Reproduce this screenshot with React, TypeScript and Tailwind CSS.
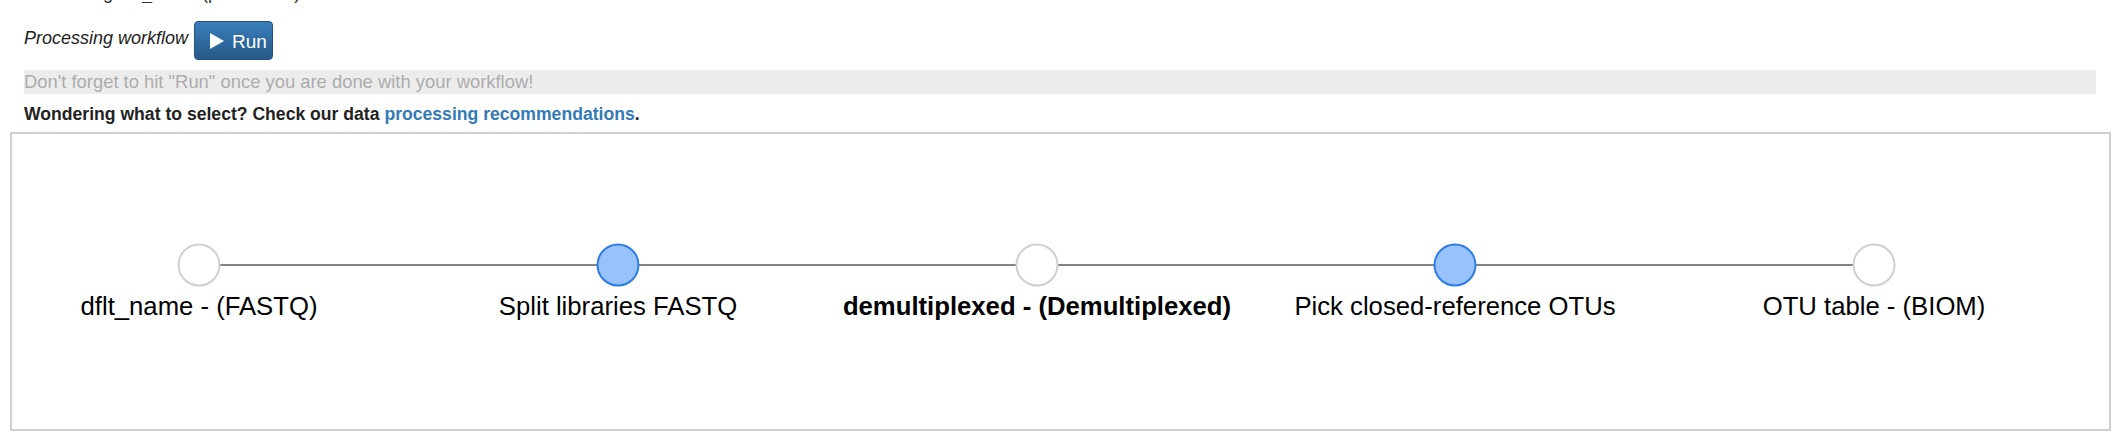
import React from 'react';

type WorkflowNode = {
  id: number;
  x: number;
  label: string;
  kind: 'data' | 'job';
  bold?: boolean;
};

const nodes: WorkflowNode[] = [
  { id: 1, x: 187, label: 'dflt_name - (FASTQ)', kind: 'data' },
  { id: 2, x: 606, label: 'Split libraries FASTQ', kind: 'job' },
  { id: 3, x: 1025, label: 'demultiplexed - (Demultiplexed)', kind: 'data', bold: true },
  { id: 4, x: 1443, label: 'Pick closed-reference OTUs', kind: 'job' },
  { id: 5, x: 1862, label: 'OTU table - (BIOM)', kind: 'data' },
];

const NODE_Y = 131;
const LABEL_Y = 181;

const WorkflowGraph: React.FC = () => (
  <svg width="2097" height="295" className="block">
    <line
      x1={nodes[0].x}
      y1={NODE_Y}
      x2={nodes[nodes.length - 1].x}
      y2={NODE_Y}
      stroke="#848484"
      strokeWidth={2}
    />
    {nodes.map((node) => (
      <g key={node.id}>
        <circle
          cx={node.x}
          cy={NODE_Y}
          r={20.5}
          fill={node.kind === 'job' ? '#97c2fc' : '#ffffff'}
          stroke={node.kind === 'job' ? '#2b7ce9' : '#cfcfcf'}
          strokeWidth={2}
        />
        <text
          x={node.x}
          y={LABEL_Y}
          textAnchor="middle"
          fontSize={25.7}
          fontWeight={node.bold ? 700 : 400}
          fill="#000000"
        >
          {node.label}
        </text>
      </g>
    ))}
  </svg>
);

const App: React.FC = () => {
  return (
    <div className="w-[2120px] h-[440px] overflow-hidden bg-white font-['Liberation_Sans',Arial,sans-serif] text-[#222]">
      {/* tail of the line above, scrolled out of view */}
      <div className="h-[3px] overflow-hidden pl-[24px]">
        <div className="-mt-[16px] text-[18px] leading-[18px] text-[#333]">
          Processing dflt_name (paired-end)
        </div>
      </div>

      <div className="mt-[18px] pl-[24px] flex items-start h-[39px]">
        <span className="mt-[7px] text-[18px] leading-[20px] italic text-[#222]">
          Processing workflow
        </span>
        <button className="ml-[6px] h-[39px] w-[79px] flex items-center pl-[15px] rounded-[4px] border border-[#245580] bg-gradient-to-b from-[#3a7ebc] to-[#265a88] text-white">
          <svg width="14" height="16" viewBox="0 0 14 16" className="block">
            <polygon points="0,0 14,8 0,16" fill="#ffffff" />
          </svg>
          <span className="ml-[8px] pt-[3px] text-[19px] leading-[20px]">Run</span>
        </button>
      </div>

      <div className="mt-[10px] mx-[24px] h-[24px] bg-[#ececec] text-[18.4px] leading-[24px] text-[#acacac]">
        Don't forget to hit "Run" once you are done with your workflow!
      </div>

      <div className="mt-[8px] pl-[24px] text-[17.6px] leading-[24px] font-bold text-[#222]">
        Wondering what to select? Check our data{' '}
        <a className="text-[#337ab7]">processing recommendations</a>.
      </div>

      <div className="mt-[6px] ml-[10px] w-[2101px] h-[299px] border-2 border-[#d0d0d0] bg-white">
        <WorkflowGraph />
      </div>
    </div>
  );
};

export default App;
